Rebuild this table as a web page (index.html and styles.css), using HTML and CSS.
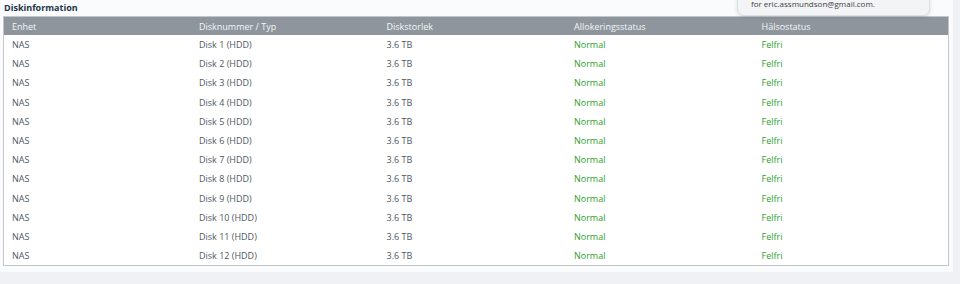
FILE: index.html
```html
<!DOCTYPE html>
<html lang="sv">
<head>
<meta charset="utf-8">
<title>Diskinformation</title>
<link rel="stylesheet" href="styles.css">
</head>
<body>
<div class="page">
  <section class="panel">
    <h2 class="title">Diskinformation</h2>
    <table class="disks">
      <colgroup><col class="c"><col class="c"><col class="c"><col class="c"><col></colgroup>
      <thead>
        <tr><th>Enhet</th><th>Disknummer / Typ</th><th>Diskstorlek</th><th>Allokeringsstatus</th><th>Hälsostatus</th></tr>
      </thead>
      <tbody>
        <tr><td>NAS</td><td>Disk 1 (HDD)</td><td>3.6 TB</td><td class="ok">Normal</td><td class="ok">Felfri</td></tr>
        <tr><td>NAS</td><td>Disk 2 (HDD)</td><td>3.6 TB</td><td class="ok">Normal</td><td class="ok">Felfri</td></tr>
        <tr><td>NAS</td><td>Disk 3 (HDD)</td><td>3.6 TB</td><td class="ok">Normal</td><td class="ok">Felfri</td></tr>
        <tr><td>NAS</td><td>Disk 4 (HDD)</td><td>3.6 TB</td><td class="ok">Normal</td><td class="ok">Felfri</td></tr>
        <tr><td>NAS</td><td>Disk 5 (HDD)</td><td>3.6 TB</td><td class="ok">Normal</td><td class="ok">Felfri</td></tr>
        <tr><td>NAS</td><td>Disk 6 (HDD)</td><td>3.6 TB</td><td class="ok">Normal</td><td class="ok">Felfri</td></tr>
        <tr><td>NAS</td><td>Disk 7 (HDD)</td><td>3.6 TB</td><td class="ok">Normal</td><td class="ok">Felfri</td></tr>
        <tr><td>NAS</td><td>Disk 8 (HDD)</td><td>3.6 TB</td><td class="ok">Normal</td><td class="ok">Felfri</td></tr>
        <tr><td>NAS</td><td>Disk 9 (HDD)</td><td>3.6 TB</td><td class="ok">Normal</td><td class="ok">Felfri</td></tr>
        <tr><td>NAS</td><td>Disk 10 (HDD)</td><td>3.6 TB</td><td class="ok">Normal</td><td class="ok">Felfri</td></tr>
        <tr><td>NAS</td><td>Disk 11 (HDD)</td><td>3.6 TB</td><td class="ok">Normal</td><td class="ok">Felfri</td></tr>
        <tr><td>NAS</td><td>Disk 12 (HDD)</td><td>3.6 TB</td><td class="ok">Normal</td><td class="ok">Felfri</td></tr>
      </tbody>
    </table>
  </section>
  <div class="toast">for eric.assmundson@gmail.com.</div>
</div>
</body>
</html>
```
FILE: styles.css
```css
html, body {
  margin: 0;
  padding: 0;
}
body {
  background: #eff1f4;
  font-family: "Open Sans", "DejaVu Sans", sans-serif;
  font-size: 9px;
  color: #4e5863;
  width: 960px;
  height: 284px;
  overflow: hidden;
}
.page {
  position: relative;
  width: 960px;
  height: 284px;
}
.panel {
  width: 953px;
  height: 272px;
  background: #fafbfc;
  box-sizing: border-box;
  padding: 0 4px 0 3px;
}
.title {
  margin: 0;
  height: 16px;
  line-height: 15px;
  padding-left: 1px;
  font-size: 9px;
  font-weight: bold;
  color: #213347;
}
.disks {
  width: 946px;
  border-collapse: collapse;
  table-layout: fixed;
  background: #ffffff;
  border: 1px solid #c3c7cc;
}
.disks col.c {
  width: 187.5px;
}
.disks th {
  background: #8f959c;
  color: #f3f5f7;
  font-weight: normal;
  text-align: left;
  height: 18px;
  padding: 0 0 0 8px;
  font-size: 9px;
}
.disks td {
  height: 19.2px;
  padding: 0 0 0 8px;
  font-size: 9px;
}
.disks td.ok {
  color: #2c9f2c;
}
.toast {
  position: absolute;
  left: 737px;
  top: -19px;
  width: 193px;
  height: 35px;
  box-sizing: border-box;
  padding: 16px 0 0 13px;
  line-height: 11px;
  background: #f3f4f5;
  border: 1px solid #dcdfe2;
  border-radius: 7px;
  box-shadow: 0 1px 4px rgba(0,0,0,0.12);
  font-size: 8px;
  color: #3a3f45;
}
```
